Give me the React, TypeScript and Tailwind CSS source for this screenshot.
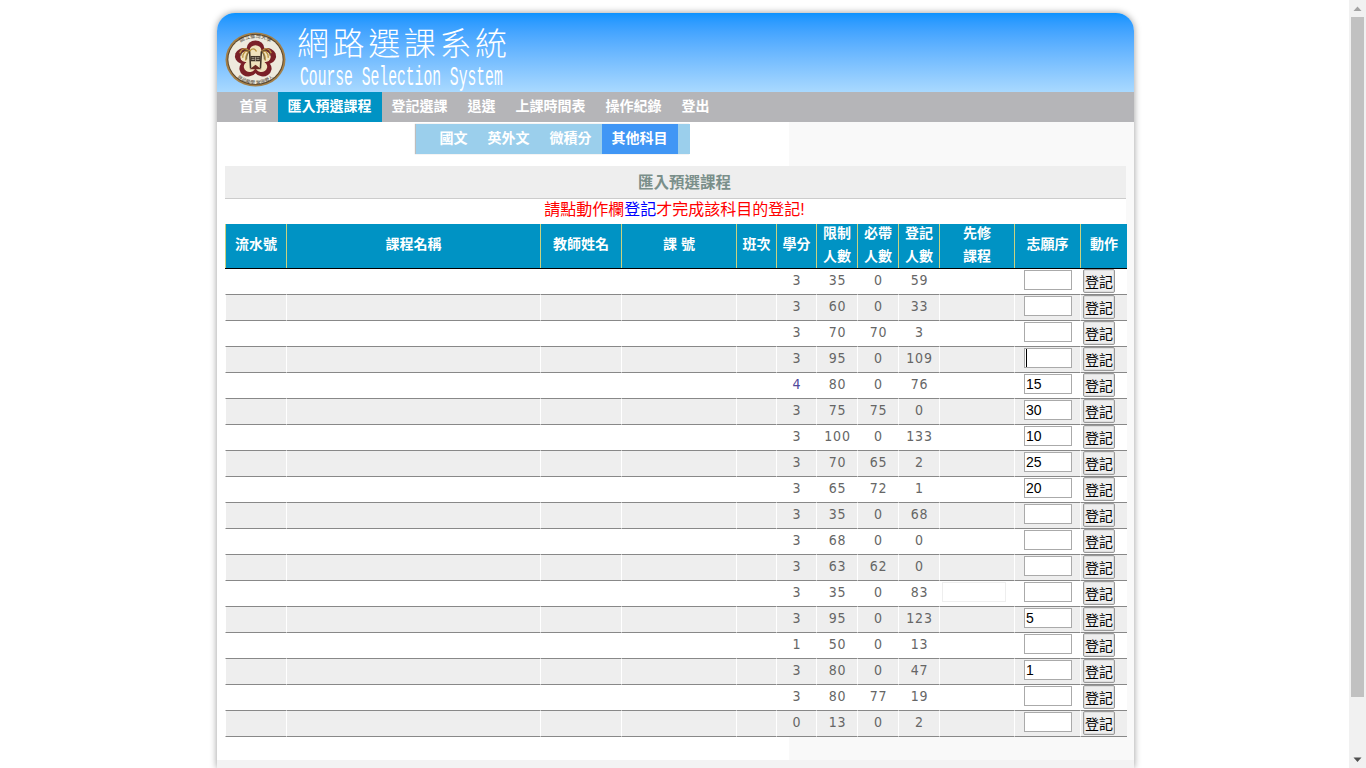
import React from "react";

const cjk = '"Liberation Sans","Noto Sans CJK TC",sans-serif';

const COLS = "grid grid-cols-[61px_254px_81px_115px_40px_40px_41px_41px_41px_75px_66px_47px]";

const rows: [number, number, number, number, string][] = [
  [3, 35, 0, 59, ""],
  [3, 60, 0, 33, ""],
  [3, 70, 70, 3, ""],
  [3, 95, 0, 109, "caret"],
  [4, 80, 0, 76, "15"],
  [3, 75, 75, 0, "30"],
  [3, 100, 0, 133, "10"],
  [3, 70, 65, 2, "25"],
  [3, 65, 72, 1, "20"],
  [3, 35, 0, 68, ""],
  [3, 68, 0, 0, ""],
  [3, 63, 62, 0, ""],
  [3, 35, 0, 83, ""],
  [3, 95, 0, 123, "5"],
  [1, 50, 0, 13, ""],
  [3, 80, 0, 47, "1"],
  [3, 80, 77, 19, ""],
  [0, 13, 0, 2, ""],
];

function Logo() {
  const lobes = [0, 72, 144, 216, 288];
  return (
    <svg width="61" height="55" viewBox="0 0 62 62" preserveAspectRatio="none" className="shrink-0">
      <defs>
        <path id="ringTop" d="M 6.5 31 A 24.5 24.5 0 0 1 55.5 31" />
        <path id="ringBot" d="M 3.5 31 A 27.5 27.5 0 0 0 58.5 31" />
      </defs>
      <circle cx="31" cy="31" r="30.5" fill="#a37f48" />
      <circle cx="31" cy="31" r="28.6" fill="#5a452a" />
      <circle cx="31" cy="31" r="27.6" fill="#eeeadd" />
      <text fontSize="5.4" fill="#4a3f34" fontFamily='"Noto Sans CJK TC",sans-serif'>
        <textPath href="#ringTop" startOffset="50%" textAnchor="middle">國立臺灣大學</textPath>
      </text>
      <text fontSize="5" fill="#4a3f34" fontFamily='"Noto Sans CJK TC",sans-serif'>
        <textPath href="#ringBot" startOffset="50%" textAnchor="middle">敦品勵學 愛國愛人</textPath>
      </text>
      {lobes.map((a) => (
        <circle key={a} cx="31" cy="18.5" r="9" fill="#7a2027" transform={`rotate(${a} 31 31)`} />
      ))}
      <circle cx="31" cy="31" r="13" fill="#7a2027" />
      {lobes.map((a) => (
        <circle key={a} cx="31" cy="21" r="6" fill="#efe3bd" transform={`rotate(${a} 31 31)`} />
      ))}
      <circle cx="31" cy="31" r="10" fill="#efe3bd" />
      <g fill="none" stroke="#b8923f" strokeWidth="1.4">
        <path d="M25 22 C21 17 17 18 15 24" />
        <path d="M25 22 C21 20 18 23 18 29" />
        <path d="M25 22 C23 22 21 26 21 32" />
        <path d="M25 22 C27 18 30 18 32 22" />
        <path d="M37 22 C41 17 45 18 47 24" />
        <path d="M37 22 C41 20 44 23 44 29" />
        <path d="M37 22 C39 22 41 26 41 32" />
      </g>
      <g fill="none" stroke="#4d4030" strokeWidth="0.8">
        <path d="M25 22 C20 19 17 21 16 27" />
        <path d="M37 22 C42 19 45 21 46 27" />
        <path d="M25 22 C23 24 22 27 22 31" />
        <path d="M37 22 C39 24 40 27 40 31" />
      </g>
      <path d="M25 22 L26 41 M37 22 L36 41" stroke="#3f3428" strokeWidth="1.6" fill="none" />
      <rect x="26" y="27" width="10" height="6" fill="#3f3428" />
      <path d="M31 28 V33 M27 29 H30 M32 29 H35 M27 31 H30 M32 31 H35" stroke="#e9e2cf" strokeWidth="0.6" />
      <path d="M25 42 L31 37 L37 42 Z" fill="#6b2a22" />
    </svg>
  );
}

function Num({ v, cls = "text-[#666]" }: { v: number; cls?: string }) {
  return (
    <div className={`flex items-start justify-center border-b border-l border-b-[#888] border-l-white pl-[1px] pt-[3px] font-['DejaVu_Sans_Condensed','DejaVu_Sans'] text-[14px] leading-[17px] tracking-[0.8px] ${cls}`}>
      {v}
    </div>
  );
}

function Empty({ children }: { children?: React.ReactNode }) {
  return <div className="flex items-start border-b border-l border-b-[#888] border-l-white">{children}</div>;
}

function Head({ lines }: { lines: string[] }) {
  return (
    <div className="flex h-[44px] flex-col items-center justify-center border-l border-l-[#c9d27f] pb-[3px] text-[14px] font-bold leading-[23px] text-white">
      {lines.map((l) => (
        <span key={l}>{l}</span>
      ))}
    </div>
  );
}

function Row({ r, i }: { r: (typeof rows)[number]; i: number }) {
  const [credit, limit, must, reg, val] = r;
  const caret = val === "caret";
  return (
    <div className={`${COLS} h-[26px] ${i % 2 ? "bg-[#eeeeee]" : ""}`}>
      <Empty />
      <Empty />
      <Empty />
      <Empty />
      <Empty />
      <Num v={credit} cls={credit === 4 ? "text-[#50489a]" : "text-[#666]"} />
      <Num v={limit} />
      <Num v={must} />
      <Num v={reg} />
      <Empty>
        {i === 12 && <div className="ml-[2px] mt-[1px] h-[20px] w-[64px] border border-[#eeeeee] bg-white" />}
      </Empty>
      <Empty>
        <div className="relative ml-[9px] mt-[1px]">
          <input
            readOnly
            value={caret ? "" : val}
            className="block h-[20px] w-[48px] border border-[#aaaaaa] bg-white px-[1px] font-['Liberation_Sans'] text-[14px] leading-[18px] text-black outline-none"
          />
          {caret && <span className="absolute left-[2px] top-[1px] h-[18px] w-[1px] bg-black" />}
        </div>
      </Empty>
      <Empty>
        <button className="ml-[2px] h-[24px] w-[32px] rounded-[2px] border border-[#999999] bg-[#eeeeee] p-0 pt-[2px] text-[14px] leading-[20px] text-black shadow-[inset_0_0_0_1px_#dddddd]">
          登記
        </button>
      </Empty>
    </div>
  );
}

export default function App() {
  const nav = ["首頁", "匯入預選課程", "登記選課", "退選", "上課時間表", "操作紀錄", "登出"];
  const sub = ["國文", "英外文", "微積分", "其他科目"];
  return (
    <div className="flex h-screen w-full overflow-hidden bg-white" style={{ fontFamily: cjk }}>
      <div className="min-w-0 flex-1 pt-[13px]">
        <div className="ml-[217px] flex h-[755px] w-[917px] flex-col rounded-t-[18px] bg-white shadow-[0_0_7px_rgba(0,0,0,0.4)]">
          <header className="flex h-[79px] items-start rounded-t-[18px] bg-gradient-to-b from-[#0b93ff] to-[#a9d9ff] pl-[8px] pt-[19px]">
            <Logo />
            <div className="ml-[11px] -mt-[10px] text-white">
              <div className="h-[38px] font-['Noto_Sans_CJK_TC'] text-[32px] font-light leading-[38px] tracking-[3.6px]">網路選課系統</div>
              <div className="ml-[3px] mt-[6px] h-[13px] origin-top scale-y-[1.9] font-['Liberation_Mono'] text-[14.7px] leading-[13px] whitespace-nowrap">Course Selection System</div>
            </div>
          </header>

          <nav className="flex h-[30px] bg-[#b5b5b8] pl-[12.5px]">
            {nav.map((n, i) => (
              <div
                key={n}
                className={`flex items-center px-[10px] pb-[2px] text-[14px] font-bold text-white ${i === 1 ? "bg-[#0093c4]" : ""}`}
              >
                {n}
              </div>
            ))}
          </nav>

          <main className="flex flex-1 flex-col bg-[linear-gradient(to_right,#ffffff_572px,#f9f9f9_572px)]">
            <div className="ml-[199px] mt-[2px] flex h-[30px] w-[274px] bg-[#9bcfec] pl-[13.5px] shadow-[-1px_0_1px_#bdbdbd]">
              {sub.map((s, i) => (
                <div
                  key={s}
                  className={`flex items-center px-[10px] pb-[2px] text-[14px] font-bold text-white ${i === 3 ? "bg-[#4096f5]" : ""}`}
                >
                  {s}
                </div>
              ))}
            </div>

            <div className="ml-[8px] mt-[12px] flex h-[33px] w-[901px] items-center justify-center border-b border-b-[#cccccc] bg-[#eeeeee] pl-[18px] pt-[1px] text-[15.5px] font-bold text-[#7a8f8a]">
              匯入預選課程
            </div>

            <div className="ml-[8px] flex h-[25px] w-[901px] items-center justify-center bg-white pb-[4px] pr-[2px] text-[16px] text-[#ff0000]">
              <span>請點動作欄</span>
              <span className="text-[#0000ff]">登記</span>
              <span>才完成該科目的登記!</span>
            </div>

            <div className="ml-[8px] w-[902px] bg-white">
              <div className={`${COLS} h-[45px] border-b border-b-black bg-[#0093c4]`}>
                <Head lines={["流水號"]} />
                <Head lines={["課程名稱"]} />
                <Head lines={["教師姓名"]} />
                <Head lines={["課 號"]} />
                <Head lines={["班次"]} />
                <Head lines={["學分"]} />
                <Head lines={["限制", "人數"]} />
                <Head lines={["必帶", "人數"]} />
                <Head lines={["登記", "人數"]} />
                <Head lines={["先修", "課程"]} />
                <Head lines={["志願序"]} />
                <Head lines={["動作"]} />
              </div>
              {rows.map((r, i) => (
                <Row key={i} r={r} i={i} />
              ))}
            </div>

            <div className="mt-[23px] flex-1 bg-[#f3f3f3]" />
          </main>
        </div>
      </div>

      <aside className="flex w-[17px] shrink-0 flex-col items-center bg-[#f1f1f1]">
        <div className="flex h-[17px] items-center justify-center">
          <svg width="9" height="6" viewBox="0 0 9 6"><path d="M4.5 0.5 L8.5 5 H0.5 Z" fill="#a3a3a3" /></svg>
        </div>
        <div className="h-[680px] w-[13px] bg-[#c1c1c1]" />
        <div className="flex-1" />
        <div className="flex h-[17px] items-center justify-center">
          <svg width="9" height="6" viewBox="0 0 9 6"><path d="M0.5 0.5 H8.5 L4.5 5 Z" fill="#505050" /></svg>
        </div>
      </aside>
    </div>
  );
}
